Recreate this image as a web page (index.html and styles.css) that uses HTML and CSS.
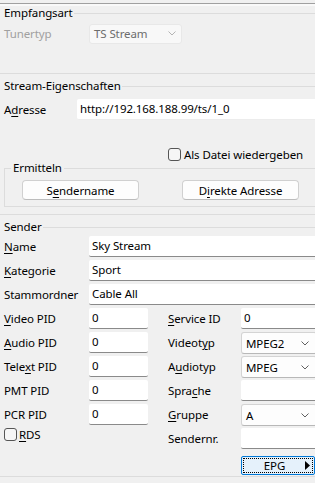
FILE: index.html
```html
<!DOCTYPE html>
<html lang="de">
<head>
    <meta charset="UTF-8">
    <meta name="viewport" content="width=device-width, initial-scale=1.0">
    <title>Sender bearbeiten</title>
    <link rel="stylesheet" href="styles.css">
</head>
<body>
<div class="dialog">
    <div class="top-edge"></div>

    <section class="group group-empfang">
        <div class="group-title"><span>Empfangsart</span></div>
        <div class="tuner-row">
            <span class="label disabled">Tunertyp</span>
            <div class="combo combo-disabled">
                <span>TS Stream</span>
                <svg class="chevron" width="8" height="5" viewBox="0 0 8 5"><polyline points="0.5,0.5 4,4 7.5,0.5"/></svg>
            </div>
        </div>
    </section>

    <section class="group group-stream">
        <div class="group-title"><span>Stream-Eigenschaften</span></div>
        <div class="address-row">
            <span class="label">A<u>d</u>resse</span>
            <div class="field">http://192.168.188.99/ts/1_0</div>
        </div>
        <div class="check-row">
            <span class="checkbox"></span>
            <span>Als Datei wiedergeben</span>
        </div>
        <fieldset class="subgroup">
            <legend>Ermitteln</legend>
            <div class="button-row">
                <button class="btn">S<u>e</u>ndername</button>
                <button class="btn">D<u>i</u>rekte Adresse</button>
            </div>
        </fieldset>
    </section>

    <section class="group group-sender">
        <div class="group-title"><span>Sender</span></div>
        <div class="sender-grid">
            <span class="label"><u>N</u>ame</span>
            <div class="field span-all">Sky Stream</div>

            <span class="label"><u>K</u>ategorie</span>
            <div class="field span-all">Sport</div>

            <span class="label">Stammordner</span>
            <div class="field span-all">Cable All</div>

            <span class="label"><u>V</u>ideo PID</span>
            <div class="field">0</div>
            <span class="gap"></span>
            <span class="label"><u>S</u>ervice ID</span>
            <div class="field">0</div>

            <span class="label"><u>A</u>udio PID</span>
            <div class="field">0</div>
            <span class="gap"></span>
            <span class="label">Videot<u>y</u>p</span>
            <div class="combo">
                <span>MPEG2</span>
                <svg class="chevron" width="8" height="5" viewBox="0 0 8 5"><polyline points="0.5,0.5 4,4 7.5,0.5"/></svg>
            </div>

            <span class="label">Tele<u>x</u>t PID</span>
            <div class="field">0</div>
            <span class="gap"></span>
            <span class="label">A<u>u</u>diotyp</span>
            <div class="combo">
                <span>MPEG</span>
                <svg class="chevron" width="8" height="5" viewBox="0 0 8 5"><polyline points="0.5,0.5 4,4 7.5,0.5"/></svg>
            </div>

            <span class="label">PMT PID</span>
            <div class="field">0</div>
            <span class="gap"></span>
            <span class="label">Spra<u>c</u>he</span>
            <div class="field"></div>

            <span class="label">PCR PID</span>
            <div class="field">0</div>
            <span class="gap"></span>
            <span class="label"><u>G</u>ruppe</span>
            <div class="combo">
                <span>A</span>
                <svg class="chevron" width="8" height="5" viewBox="0 0 8 5"><polyline points="0.5,0.5 4,4 7.5,0.5"/></svg>
            </div>

            <div class="rds">
                <span class="checkbox"></span>
                <span><u>R</u>DS</span>
            </div>
            <span></span>
            <span class="gap"></span>
            <span class="label">Sendernr.</span>
            <div class="field"></div>

            <button class="epg-button">
                <span class="epg-focus">
                    <span class="epg-text">EPG</span>
                    <svg class="epg-arrow" width="5" height="9" viewBox="0 0 5 9"><polygon points="0,0 5,4.5 0,9"/></svg>
                </span>
            </button>
        </div>
    </section>
</div>
</body>
</html>
```

FILE: styles.css
```css
* {
    margin: 0;
    padding: 0;
    box-sizing: border-box;
}

body {
    background-color: #f0f0f0;
    font-family: "Noto Sans", "Liberation Sans", sans-serif;
    font-size: 11.5px;
    letter-spacing: -0.1px;
    color: #000;
    overflow: hidden;
}

u {
    text-underline-offset: 2px;
}

.dialog {
    width: 317px;
}

.top-edge {
    height: 6px;
    border-top: 3px solid #f0f0f0;
    border-bottom: 2px solid #f9f9f9;
    background-color: #a0a0a0;
}

/* group boxes: only the title line and bottom edge are in view */
.group {
    border-bottom: 1px solid #dcdcdc;
}

.group-title {
    display: flex;
    align-items: center;
    height: 14px;
    line-height: 14px;
    padding-left: 4px;
}

.group-title::after {
    content: "";
    flex: 1;
    margin-left: 1px;
    border-top: 1px solid #dcdcdc;
}

.label {
    line-height: 21px;
    white-space: nowrap;
}

.label.disabled {
    color: #a0a0a0;
}

.field {
    height: 21px;
    line-height: 20px;
    padding-left: 3px;
    background-color: #fff;
    border-bottom: 1px solid #8a8a8a;
    border-radius: 2px;
    white-space: nowrap;
}

.combo {
    display: flex;
    align-items: center;
    justify-content: space-between;
    height: 22px;
    padding: 0 7px 0 4px;
    background-color: #fdfdfd;
    border: 1px solid #d4d4d4;
    border-bottom-color: #b8b8b8;
    border-radius: 3px;
}

.chevron polyline {
    fill: none;
    stroke: #606060;
    stroke-width: 1;
}

.combo-disabled {
    width: 93px;
    height: 20px;
    background-color: #f8f8f8;
    border-color: #e8e8e8;
    color: #6d6d6d;
    padding-right: 5px;
}

.combo-disabled .chevron polyline {
    stroke: #b4b4b4;
}

/* Empfangsart */
.group-empfang {
    padding-bottom: 29px;
}

.tuner-row {
    display: flex;
    align-items: center;
    margin-top: 3px;
    padding-left: 4px;
}

.tuner-row .label {
    width: 85px;
}

/* Stream-Eigenschaften */
.group-stream {
    padding-top: 5px;
    padding-bottom: 7px;
}

.address-row {
    display: flex;
    margin-top: 6px;
    padding-left: 4px;
}

.address-row .label {
    width: 73px;
}

.address-row .field {
    flex: 1;
    border-bottom-color: #ececec;
}

.check-row {
    display: flex;
    align-items: center;
    gap: 3px;
    margin-top: 28px;
    padding-left: 168px;
    height: 13px;
}

.checkbox {
    width: 13px;
    height: 13px;
    border: 1px solid #555;
    border-radius: 3px;
    background-color: #f6f6f6;
}

.subgroup {
    margin-left: 4px;
    margin-right: -10px;
    border: 1px solid #dcdcdc;
    padding: 5px 0 6px 0;
}

.subgroup legend {
    margin-left: 6px;
    padding: 0 2px;
    line-height: 14px;
}

.button-row {
    display: flex;
    gap: 43px;
    padding-left: 17px;
}

.btn {
    width: 117px;
    height: 20px;
    font-family: inherit;
    font-size: inherit;
    letter-spacing: inherit;
    color: #000;
    background-color: #fdfdfd;
    border: 1px solid #d0d0d0;
    border-bottom-color: #bcbcbc;
    border-radius: 4px;
}

/* Sender */
.group-sender {
    padding-top: 5px;
    padding-bottom: 3px;
}

.sender-grid {
    display: grid;
    grid-template-columns: 85px 59px 20px 73px 1fr;
    grid-auto-rows: 21px;
    row-gap: 3px;
    margin-top: 2px;
    padding-left: 4px;
}

.span-all {
    grid-column: 2 / -1;
}

.rds {
    display: flex;
    align-items: center;
    gap: 2px;
    height: 13px;
    line-height: 13px;
}

.epg-button {
    grid-column: 5;
    width: 74px;
    height: 19px;
    margin-top: 4px;
    padding: 1px;
    font-family: inherit;
    font-size: inherit;
    letter-spacing: inherit;
    color: #000;
    background-color: #e5f1fb;
    border: 1px solid #0078d7;
    border-radius: 2px;
}

.epg-focus {
    display: flex;
    align-items: center;
    height: 100%;
    border: 1px dotted #000;
    padding-right: 2px;
}

.epg-text {
    flex: 1;
    text-align: center;
    line-height: 14px;
}
```
